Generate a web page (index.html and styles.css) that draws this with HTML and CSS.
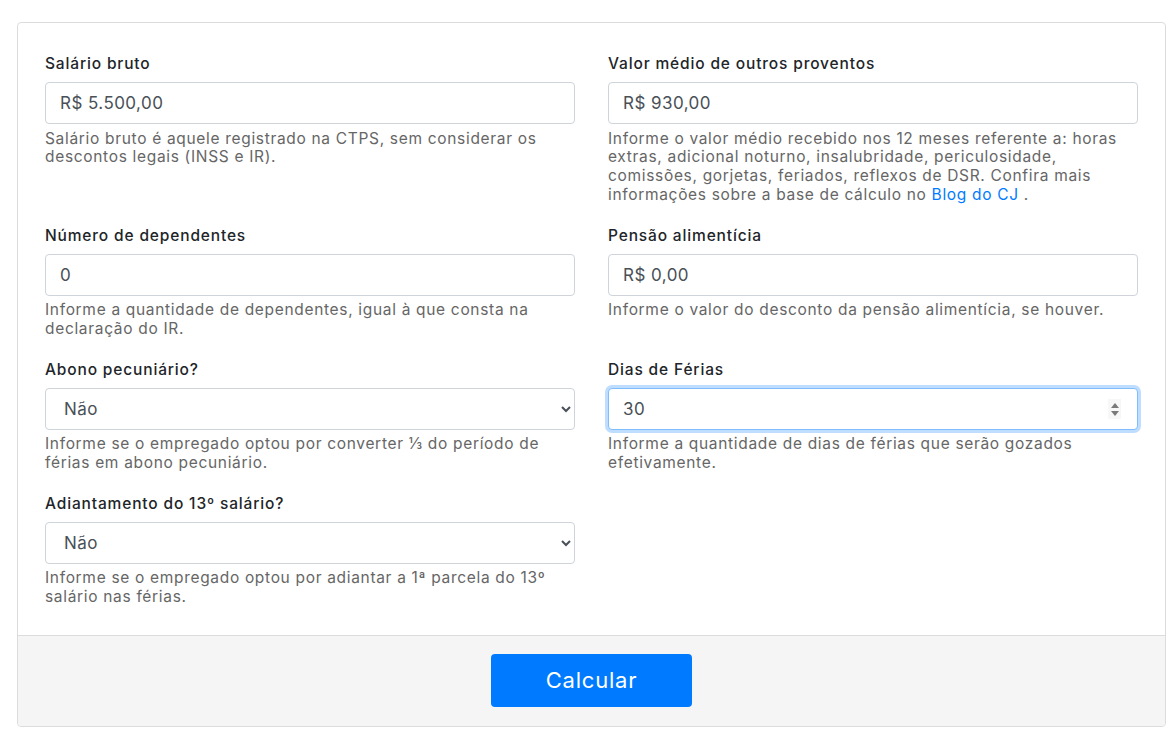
FILE: index.html
```html
<!DOCTYPE html>
<html lang="pt-BR">
<head>
<meta charset="utf-8">
<title>Calculadora de Férias</title>
<link rel="stylesheet" href="styles.css">
</head>
<body>
<div class="page">
  <form class="card">
    <div class="card-body">
      <div class="row">
        <div class="group">
          <label class="label">Salário bruto</label>
          <input class="control" type="text" value="R$ 5.500,00">
          <p class="help">Salário bruto é aquele registrado na CTPS, sem considerar os descontos legais (INSS e IR).</p>
        </div>
        <div class="group">
          <label class="label">Valor médio de outros proventos</label>
          <input class="control" type="text" value="R$ 930,00">
          <p class="help">Informe o valor médio recebido nos 12 meses referente a: horas extras, adicional noturno, insalubridade, periculosidade, comissões, gorjetas, feriados, reflexos de DSR. Confira mais informações sobre a base de cálculo no <a class="link" href="#">Blog do CJ</a> .</p>
        </div>
      </div>
      <div class="row">
        <div class="group">
          <label class="label">Número de dependentes</label>
          <input class="control" type="text" value="0">
          <p class="help">Informe a quantidade de dependentes, igual à que consta na declaração do IR.</p>
        </div>
        <div class="group">
          <label class="label">Pensão alimentícia</label>
          <input class="control" type="text" value="R$ 0,00">
          <p class="help">Informe o valor do desconto da pensão alimentícia, se houver.</p>
        </div>
      </div>
      <div class="row">
        <div class="group">
          <label class="label">Abono pecuniário?</label>
          <select class="control select"><option>Não</option><option>Sim</option></select>
          <p class="help">Informe se o empregado optou por converter ⅓ do período de férias em abono pecuniário.</p>
        </div>
        <div class="group">
          <label class="label">Dias de Férias</label>
          <div class="num-wrap">
            <input class="control focused" type="text" value="30">
            <span class="spinner">
              <svg width="10" height="18" viewBox="0 0 10 18"><path d="M5 3 L9 8 L1 8 Z" fill="#7a7a7a"/><path d="M1 11 L9 11 L5 16 Z" fill="#7a7a7a"/></svg>
            </span>
          </div>
          <p class="help">Informe a quantidade de dias de férias que serão gozados efetivamente.</p>
        </div>
      </div>
      <div class="row">
        <div class="group">
          <label class="label">Adiantamento do 13º salário?</label>
          <select class="control select"><option>Não</option><option>Sim</option></select>
          <p class="help">Informe se o empregado optou por adiantar a 1ª parcela do 13º salário nas férias.</p>
        </div>
        <div></div>
      </div>
    </div>
    <div class="card-footer">
      <button class="btn" type="button">Calcular</button>
    </div>
  </form>
</div>
</body>
</html>
```
FILE: styles.css
```css
* { box-sizing: border-box; }
html, body { margin: 0; padding: 0; background: #fff; }
body {
  font-family: Inter, "Open Sans", "Noto Sans", sans-serif;
  color: #212529;
}
.page {
  padding: 22px 5px 0 17px;
}
.card {
  display: block;
  border: 1px solid #dcdcdc;
  border-radius: 4px;
  background: #fff;
  margin: 0;
}
.card-body {
  padding: 30px 27px 8px 27px;
}
.row {
  display: grid;
  grid-template-columns: 1fr 1fr;
  column-gap: 33px;
}
.group {
  margin-bottom: 20px;
}
.label {
  display: block;
  font-size: 15.5px;
  line-height: 22px;
  font-weight: 500;
  letter-spacing: 0.85px;
  margin-bottom: 7px;
  color: #212529;
}
.control {
  display: block;
  width: 100%;
  height: 42px;
  padding: 0 14px;
  font-family: inherit;
  font-size: 17px;
  letter-spacing: 0.45px;
  color: #495057;
  background: #fff;
  border: 1px solid #ced4da;
  border-radius: 4px;
  outline: none;
}
.select {
  padding-left: 14px;
  color: #495057;
}
.num-wrap {
  position: relative;
}
.focused {
  border-color: #80bdff;
  box-shadow: 0 0 0 3px rgba(0, 123, 255, 0.25);
}
.spinner {
  position: absolute;
  right: 17px;
  top: 11px;
  width: 13px;
  height: 20px;
  background: #f7f7f7;
  display: flex;
  align-items: center;
  justify-content: center;
}
.help {
  margin: 5.5px 0 0 0;
  font-size: 15.5px;
  line-height: 18.75px;
  letter-spacing: 0.68px;
  color: #666;
}
.link {
  color: #007bff;
  text-decoration: none;
}
.card-footer {
  border-top: 1px solid #dcdcdc;
  background: #f5f5f5;
  padding: 18px 0 19px 0;
  display: flex;
  justify-content: center;
  border-radius: 0 0 4px 4px;
}
.btn {
  width: 201px;
  height: 53px;
  background: #007bff;
  color: #fff;
  border: none;
  border-radius: 4px;
  font-family: inherit;
  font-size: 22px;
  letter-spacing: 0.8px;
  font-weight: 400;
  cursor: pointer;
}
```
